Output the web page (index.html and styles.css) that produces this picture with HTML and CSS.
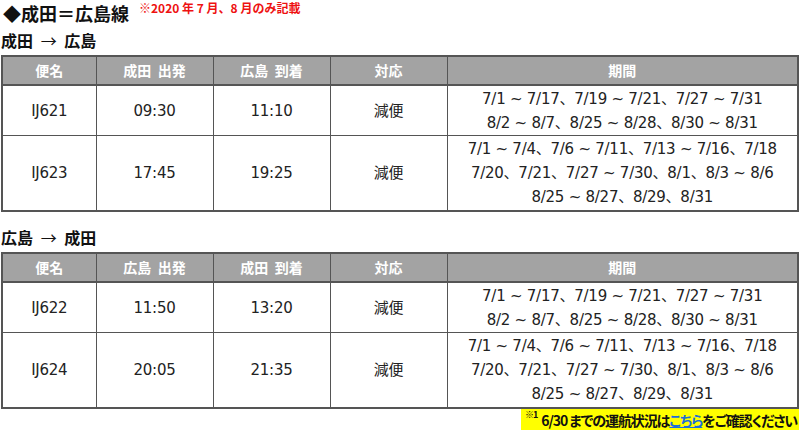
FILE: index.html
```html
<!DOCTYPE html>
<html lang="ja">
<head>
<meta charset="utf-8">
<link rel="stylesheet" href="styles.css">
</head>
<body>
<div class="page">
  <div class="title-row">
    <h1 class="title">◆成田＝広島線</h1>
    <span class="note">※2020 年 7 月、8 月のみ記載</span>
  </div>

  <h2 class="route">成田 <span class="arrow">→</span> 広島</h2>
  <table class="sched">
    <colgroup>
      <col class="c1"><col class="c2"><col class="c3"><col class="c4"><col class="c5">
    </colgroup>
    <thead>
      <tr><th>便名</th><th>成田&nbsp; 出発</th><th>広島&nbsp; 到着</th><th>対応</th><th>期間</th></tr>
    </thead>
    <tbody>
      <tr class="r2">
        <td>IJ621</td><td>09:30</td><td>11:10</td><td>減便</td>
        <td>7/1 ~ 7/17、7/19 ~ 7/21、7/27 ~ 7/31<br>8/2 ~ 8/7、8/25 ~ 8/28、8/30 ~ 8/31</td>
      </tr>
      <tr class="r3">
        <td>IJ623</td><td>17:45</td><td>19:25</td><td>減便</td>
        <td>7/1 ~ 7/4、7/6 ~ 7/11、7/13 ~ 7/16、7/18<br>7/20、7/21、7/27 ~ 7/30、8/1、8/3 ~ 8/6<br>8/25 ~ 8/27、8/29、8/31</td>
      </tr>
    </tbody>
  </table>

  <h2 class="route second">広島 <span class="arrow">→</span> 成田</h2>
  <table class="sched">
    <colgroup>
      <col class="c1"><col class="c2"><col class="c3"><col class="c4"><col class="c5">
    </colgroup>
    <thead>
      <tr><th>便名</th><th>広島&nbsp; 出発</th><th>成田&nbsp; 到着</th><th>対応</th><th>期間</th></tr>
    </thead>
    <tbody>
      <tr class="r2">
        <td>IJ622</td><td>11:50</td><td>13:20</td><td>減便</td>
        <td>7/1 ~ 7/17、7/19 ~ 7/21、7/27 ~ 7/31<br>8/2 ~ 8/7、8/25 ~ 8/28、8/30 ~ 8/31</td>
      </tr>
      <tr class="r3">
        <td>IJ624</td><td>20:05</td><td>21:35</td><td>減便</td>
        <td>7/1 ~ 7/4、7/6 ~ 7/11、7/13 ~ 7/16、7/18<br>7/20、7/21、7/27 ~ 7/30、8/1、8/3 ~ 8/6<br>8/25 ~ 8/27、8/29、8/31</td>
      </tr>
    </tbody>
  </table>

  <div class="foot-row">
    <p class="foot"><sup>※1</sup> 6/30 までの運航状況は<a href="#">こちら</a>をご確認ください</p>
  </div>
</div>
</body>
</html>
```

FILE: styles.css
```css
html, body {
  margin: 0;
  padding: 0;
  background: #fff;
}
body {
  font-family: "DejaVu Sans", Verdana, "Noto Sans CJK JP", sans-serif;
  color: #222;
}
.page {
  width: 798px;
  padding: 0 1px;
}
.title-row {
  display: flex;
  align-items: flex-start;
  gap: 10px;
  height: 27px;
}
.title {
  margin: 0;
  padding-left: 2px;
  font-family: "Noto Sans CJK JP", sans-serif;
  font-weight: bold;
  font-size: 18px;
  line-height: 26px;
  color: #111;
}
.note {
  font-family: "Noto Sans CJK JP", sans-serif;
  font-weight: bold;
  font-size: 12px;
  line-height: 14px;
  padding-top: 1px;
  color: #ee1111;
}
.route {
  margin: 0;
  height: 28px;
  font-family: "Noto Sans CJK JP", sans-serif;
  font-weight: bold;
  font-size: 16px;
  line-height: 26px;
  color: #111;
}
.route .arrow {
  font-weight: normal;
  margin: 0 4px;
}
.route.second {
  margin-top: 12px;
}
.sched {
  width: 798px;
  border-collapse: collapse;
  border: 2px solid #555;
  table-layout: fixed;
}
.c1 { width: 94px; }
.c2 { width: 117px; }
.c3 { width: 117px; }
.c4 { width: 117px; }
.c5 { width: auto; }
.sched th {
  background: #a3a3a3;
  color: #fff;
  font-family: "Noto Sans CJK JP", sans-serif;
  font-weight: bold;
  font-size: 14px;
  height: 26px;
  padding: 0 0 1px;
  border: 1px solid #555;
  border-bottom-width: 2px;
}
.sched td {
  text-align: center;
  font-size: 15px;
  letter-spacing: -0.25px;
  border: 1px solid #555;
  padding: 0;
  line-height: 24px;
}
.sched tr.r2 td { height: 49px; }
.sched tr.r3 td { height: 74px; }
.foot-row {
  display: flex;
  justify-content: flex-end;
}
.foot {
  margin: 0;
  background: #ffff00;
  font-family: "Noto Sans CJK JP", sans-serif;
  font-feature-settings: "palt";
  font-weight: bold;
  font-size: 14px;
  letter-spacing: -1.1px;
  line-height: 22px;
  padding: 0 2px 0 4px;
  color: #111;
}
.foot sup {
  font-size: 9px;
  vertical-align: top;
  line-height: 12px;
  margin-right: 2px;
}
.foot a {
  color: #1e6fd6;
  text-decoration: underline;
}
```
